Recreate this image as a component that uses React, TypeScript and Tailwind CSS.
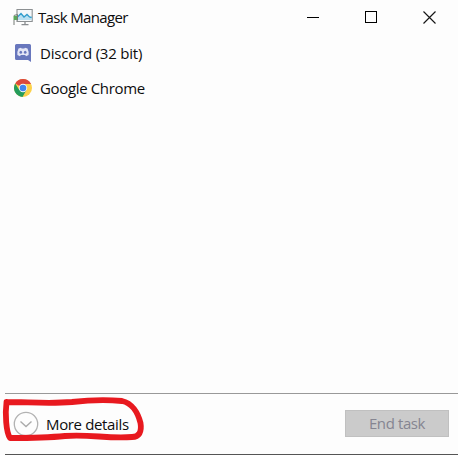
import React from "react";

function TaskManagerIcon() {
  return (
    <svg className="h-5 w-5 shrink-0" viewBox="0 0 20 20" fill="none">
      <path d="M4 1.5H19.2V13.5H4Z" fill="#f4f8fa" stroke="#8c9092" strokeWidth="1.1" />
      <path d="M4.5 9L8 5.5L11 9L14 6.5L16.5 9L18.7 9.5V12H4.5Z" fill="#b9e0f1" />
      <path d="M4.5 9L8 5.5L11 9L14 6.5L16.5 9L18.7 9.5" stroke="#319dcc" strokeWidth="1.3" />
      <path d="M12 14V16M8.5 16.7H15.5" stroke="#898d90" strokeWidth="1.3" />
      <path d="M.5 8H4V12H.5Z" fill="#5ca85b" />
      <path d="M.8 7.5L4.5 6.5V12.5M1 12V17" stroke="#747b75" strokeWidth="1" />
    </svg>
  );
}

function DiscordIcon() {
  return (
    <svg className="h-[18px] w-4 shrink-0" viewBox="0 0 16 18">
      <path d="M1.5 0H14.5Q16 0 16 1.5V18L13 16H1.5Q0 16 0 14.5V1.5Q0 0 1.5 0Z" fill="#6877bd" />
      <path d="M3.5 4.5L6 3.7L6.7 4.5H9.3L10 3.7L12.5 4.5Q14 7.5 13.6 11L11 12.3L10.2 11H5.8L5 12.3L2.4 11Q2 7.5 3.5 4.5Z" fill="#e4e6f6" />
      <ellipse cx="5.8" cy="8.3" rx="1.3" ry="1.5" fill="#6877bd" />
      <ellipse cx="10.2" cy="8.3" rx="1.3" ry="1.5" fill="#6877bd" />
    </svg>
  );
}

function ChromeIcon() {
  return (
    <svg className="h-[18px] w-[18px] shrink-0" viewBox="0 0 18 18">
      <circle cx="9" cy="9" r="9" fill="#fcd14a" />
      <path d="M9 9L1.2 4.5A9 9 0 0 1 16.8 4.5L17 5H9Z" fill="#dc4a3c" />
      <path d="M1.2 4.5A9 9 0 0 0 8.5 18L12.4 11L9 9L5.3 11Z" fill="#249c5b" />
      <circle cx="9" cy="9" r="4.2" fill="#f7f9fb" />
      <circle cx="9" cy="9" r="3.3" fill="#4286ed" />
    </svg>
  );
}

export default function App() {
  return (
    <main className="flex h-[455px] w-[458px] flex-col overflow-hidden bg-[#fdfdfd] font-['Open_Sans','Noto_Sans',sans-serif] text-[15px] leading-5 text-[#0d0d0d]">
      <header className="flex h-[35px] items-center pl-[13px]">
        <TaskManagerIcon />
        <h1 className="ml-[5px] whitespace-nowrap pb-0.5 text-[15px] tracking-[-0.65px]">Task Manager</h1>
        <div className="ml-auto flex items-center pb-px pr-[22px]">
          <button aria-label="Minimize" className="flex h-8 w-[58px] items-center justify-center">
            <span className="h-px w-3 bg-black" />
          </button>
          <button aria-label="Maximize" className="flex h-8 w-[58px] items-center justify-center">
            <span className="h-3 w-3 border border-black" />
          </button>
          <button aria-label="Close" className="ml-[23px] flex h-8 w-[13px] items-center justify-center">
            <svg className="h-[13px] w-[13px]" viewBox="0 0 13 13"><path d="M.5 .5L12.5 12.5M12.5 .5L.5 12.5" stroke="#161616" strokeWidth="1.15" /></svg>
          </button>
        </div>
      </header>
      <ul className="flex flex-col">
        <li className="flex h-[35px] items-center pl-[15px]">
          <DiscordIcon /><span className="ml-[9px] whitespace-nowrap tracking-[-0.2px]">Discord (32 bit)</span>
        </li>
        <li className="flex h-[35px] items-center pl-[14px]">
          <ChromeIcon /><span className="ml-2 whitespace-nowrap tracking-[-0.35px]">Google Chrome</span>
        </li>
      </ul>
      <footer className="relative ml-[5px] mt-auto flex h-[62px] items-center justify-between border-y border-t-[#999] border-b-[#555] pl-2 pr-[9px]">
        <button className="flex items-center">
          <svg className="h-[26px] w-[26px]" viewBox="0 0 26 26" fill="none">
            <circle cx="13" cy="13" r="11.7" stroke="#b2b2b2" strokeWidth="1.3" />
            <path d="M7.5 10.5L13 15.5L18.5 10.5" stroke="#aaa" strokeWidth="1.4" />
          </svg>
          <span className="ml-[7px] whitespace-nowrap tracking-[-0.35px]">More details</span>
        </button>
        <button disabled className="mb-px h-[27px] w-[104px] border border-[#c0c0c0] bg-[#cbcbcb] text-[15px] leading-[25px] tracking-[-0.4px] text-[#858591]">End task</button>
        <svg className="pointer-events-none absolute -left-[5px] top-0 h-[52px] w-[150px]" viewBox="0 394 150 52" fill="none">
          <path d="M6.5 402C28 402 49 404 72 402C90 400 110 400 122 401C132 403 138 413 140.5 423C142 432 139 437 132 437C108 439 90 434 65 436C45 438 27 438 10 438C6 432 5 414 6.5 402" stroke="#e8191f" strokeWidth="5.8" strokeLinecap="round" strokeLinejoin="round" />
        </svg>
      </footer>
    </main>
  );
}
